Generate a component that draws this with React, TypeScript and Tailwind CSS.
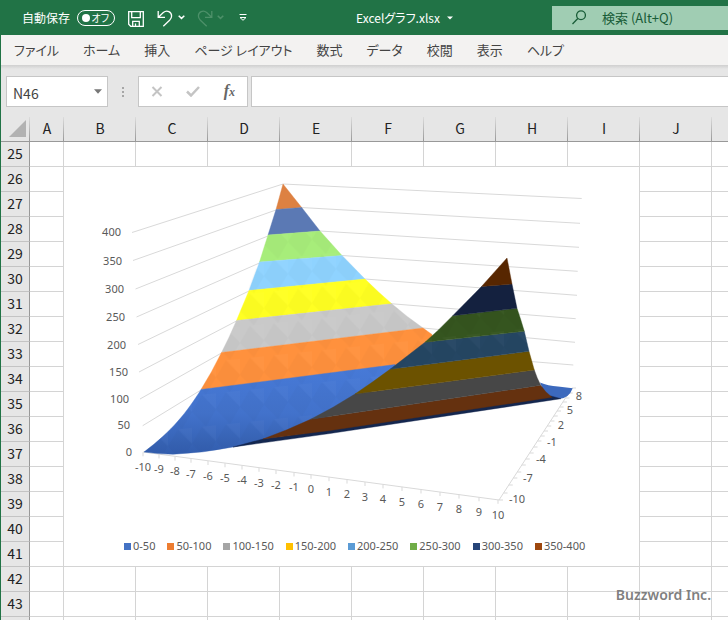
import type { ReactNode } from "react";

const TABS = ["ファイル", "ホーム", "挿入", "ページ レイアウト", "数式", "データ", "校閲", "表示", "ヘルプ"];

const COLUMNS = ["A", "B", "C", "D", "E", "F", "G", "H", "I", "J"];
const FIRST_ROW = 25;
const CHART_ROW = 26;
const CHART_ROW_SPAN = 16;
const ROWS = Array.from({ length: 19 }, (_, i) => FIRST_ROW + i);

const LEGEND = [
  { label: "0-50", swatch: "bg-[#4472c4]" },
  { label: "50-100", swatch: "bg-[#ed7d31]" },
  { label: "100-150", swatch: "bg-[#a5a5a5]" },
  { label: "150-200", swatch: "bg-[#ffc000]" },
  { label: "200-250", swatch: "bg-[#5b9bd5]" },
  { label: "250-300", swatch: "bg-[#70ad47]" },
  { label: "300-350", swatch: "bg-[#264478]" },
  { label: "350-400", swatch: "bg-[#9e480e]" },
];

// [label, x, y]
const VALUE_LABELS: [number, number, number][] = [
  [400, 121, 232],
  [350, 122, 261],
  [300, 124, 289],
  [250, 125, 317],
  [200, 126, 345],
  [150, 128, 372],
  [100, 129, 399],
  [50, 130, 425],
  [0, 132, 452],
];

const X_AXIS: [number, number, number][] = [
  [-10, 143, 467],
  [-9, 159, 469],
  [-8, 175, 471],
  [-7, 191, 474],
  [-6, 208, 476],
  [-5, 225, 478],
  [-4, 242, 480],
  [-3, 259, 483],
  [-2, 276, 485],
  [-1, 294, 487],
  [0, 311, 489],
  [1, 329, 492],
  [2, 347, 494],
  [3, 365, 497],
  [4, 383, 499],
  [5, 402, 502],
  [6, 421, 504],
  [7, 440, 507],
  [8, 459, 509],
  [9, 479, 512],
  [10, 498, 515],
];

const DEPTH_LABELS: [number, number, number][] = [
  [-10, 517, 499],
  [-7, 528, 478],
  [-4, 541, 459],
  [-1, 552, 442],
  [2, 561, 425],
  [5, 570, 410],
  [8, 579, 396],
];

const DEPTH_TICKS = [500, 493, 485, 478, 472, 465, 459, 453, 447, 441, 436, 431, 426, 421, 416, 411, 407, 402, 398, 393, 388];

const WALL_LINES = [
  "M132 232.5 283 184 581.7 198.5",
  "M133 260.5 276 210M301 207.5 580 223.3",
  "M135.5 289 268 236M320 231 579 247.3",
  "M136.5 317 259.5 263M342 255.5 577.7 271.3",
  "M138 344.5 249 291M365 279 577 295.3",
  "M139 372 236.5 321M391 303.7 575.7 318.7",
  "M140 399 221.5 353M423 328 575 342.3",
  "M142.7 425.7 201 390M500 359 573.3 365",
];

const BANDS = [
  { fill: "#dd8142", d: "M283 184 301.7 207.5 276 209.5Z" },
  { fill: "#5b79b4", d: "M276 209.5 301.7 207.5 320 231 268 235Z" },
  { fill: "#a7ed7a", d: "M268 235 320 231 342 255.5 259.5 262Z" },
  { fill: "#8fd3ff", d: "M259.5 262 342 255.5 365 279 249 290.5Z" },
  { fill: "#ffff22", d: "M249 290.5 365 279Q378 292 391.7 303.7L236.5 320.5Z" },
  { fill: "#c9c9c9", d: "M236.5 320.5 391.7 303.7Q407 317 423 328L221.5 352.5Q229 338 236.5 320.5Z" },
  { fill: "#ff913d", d: "M221.5 352.5 423 328 432 334.5 434 345 394 372 201 389.5Q212 372 221.5 352.5Z" },
  {
    fill: "url(#blueBand)",
    d: "M201 389.5 395 364.5 394 376Q312 436 233 447Q203 453 173 454.3Q158 454 144 452C172 431 187 412 201 389.5Z",
  },
];

const SHADED_BANDS = [
  { fill: "#14274f", d: "M233 447 263 439 330 429.5 551 396 561 398.7 330 433.5Z" },
  { fill: "#65310f", d: "M263 439Q288 430 310.7 419.3L540.7 385.3Q545 392 552 397.3L330 430.5Z" },
  { fill: "#474747", d: "M310.7 419.3Q333 408 355 394L534.3 370Q537 378 540.7 385.3Z" },
  { fill: "#6c5200", d: "M355 394Q373 382 390 369.3L529 351.3 534.3 370Z" },
  { fill: "#254663", d: "M390 369.3 425 342.2 524.3 331.3 529 351.3Z" },
  { fill: "#35551f", d: "M425 342.2Q439 330 452.7 315.7L517 308.3Q521 320 524.3 331.3Z" },
  { fill: "#14213f", d: "M452.7 315.7 481.5 286.5 512 284 517 308.3Z" },
  { fill: "#572600", d: "M481.5 286.5 507 258 512 284Z" },
];

function SurfaceChart() {
  return (
    <svg viewBox="64 167 575 360" className="block h-[360px] w-[575px]" role="img" aria-label="等高線グラフ">
      <defs>
        <linearGradient id="blueBand" x1="0" y1="0" x2="0" y2="1">
          <stop offset="0" stopColor="#477ad8" />
          <stop offset="0.55" stopColor="#4272cb" />
          <stop offset="1" stopColor="#325dad" />
        </linearGradient>
        <pattern id="facets" width="24" height="32" patternUnits="userSpaceOnUse" patternTransform="skewY(-6)">
          <path d="M0 16 10 0 24 16 14 32Z" fill="#000" fillOpacity="0.02" />
          <path d="M10 0 24 0 24 16Z" fill="#fff" fillOpacity="0.025" />
        </pattern>
      </defs>

      <g fill="none" stroke="#d9d9d9">
        {WALL_LINES.map((d) => (
          <path key={d} d={d} />
        ))}
        <path d="M143 452 499 500 572 388" />
        {X_AXIS.map(([n, x]) => {
          const y = 452.3 + ((x - 143) * 47.5) / 355;
          return <path key={n} d={`M${x} ${y}v4`} />;
        })}
        {DEPTH_TICKS.map((y) => {
          const x = 499 + ((500 - y) * 73) / 112;
          return <path key={y} d={`M${x} ${y}h4`} />;
        })}
      </g>

      <path d="M540 382.5Q548 386 558 386.5L572.7 388.3Q569 398 560 398.7Q550 399 543 390Z" fill="#3c69bd" />
      {BANDS.map((b) => (
        <path key={b.fill} d={b.d} fill={b.fill} stroke={b.fill} strokeWidth="0.4" />
      ))}
      <path
        d="M268 235 320 231 365 279Q392 306 431.5 334L394 365.5Q312 431 233 447L173 454 144 452C172 431 187 412 201 389.5Q220 360 236.5 320.5Z"
        fill="url(#facets)"
      />
      {SHADED_BANDS.map((b) => (
        <path key={b.fill} d={b.d} fill={b.fill} stroke={b.fill} strokeWidth="0.4" />
      ))}
      <path d="M390 369.3 452.7 315.7 517 308.3 529 351.3Z" fill="url(#facets)" />

      <g fill="#595959" fontSize="11" className="font-['Noto_Sans',sans-serif]">
        {VALUE_LABELS.map(([n, x, y]) => (
          <text key={n} x={x} y={y + 4} textAnchor="end">
            {n}
          </text>
        ))}
        {X_AXIS.map(([n, x, y]) => (
          <text key={n} x={x} y={y + 4} textAnchor="middle">
            {n}
          </text>
        ))}
        {DEPTH_LABELS.map(([n, x, y]) => (
          <text key={n} x={x} y={y + 4} textAnchor="middle">
            {n}
          </text>
        ))}
      </g>
    </svg>
  );
}

function ChartObject() {
  return (
    <div className="h-[399px] overflow-hidden bg-white">
      <SurfaceChart />
      <ul className="flex gap-3 pl-[60px] pt-[11px] font-['Noto_Sans',sans-serif] text-[11px] leading-4 text-[#595959]">
        {LEGEND.map((item) => (
          <li key={item.label} className="flex items-center gap-[2px] whitespace-nowrap">
            <span className={`size-[7px] ${item.swatch}`} />
            {item.label}
          </li>
        ))}
      </ul>
    </div>
  );
}

function Icon({ width, height, children }: { width: number; height: number; children: ReactNode }) {
  return (
    <svg
      width={width}
      height={height}
      viewBox={`0 0 ${width} ${height}`}
      fill="none"
      stroke="currentColor"
      strokeWidth="1.3"
      aria-hidden="true"
    >
      {children}
    </svg>
  );
}

function TitleBar() {
  return (
    <header className="flex h-[35px] shrink-0 items-center bg-[#217346] pl-[22px] text-xs text-white">
      <span id="autosave">自動保存</span>
      <button
        type="button"
        role="switch"
        aria-checked="false"
        aria-labelledby="autosave"
        className="ml-[7px] flex h-4 w-[38px] items-center justify-between rounded-full border border-white pl-1 pr-[5px] text-[10px] leading-none"
      >
        <span className="size-2 rounded-full bg-white" />
        オフ
      </button>
      <button type="button" aria-label="上書き保存" className="ml-[13px] mt-[3px]">
        <Icon width={16} height={16}>
          <path d="M.7.7h14.6v14.6H2.7l-2-2zM3.7.7v6h8.6v-6M4.7 15.3v-5h6.6v5M7.5 12.5v2.8" />
        </Icon>
      </button>
      <button type="button" aria-label="元に戻す" className="ml-[13px] mt-[2px]">
        <Icon width={16} height={17}>
          <path d="M1.2 1v6.3h6.8M1.6 7 6.3 2.6C10 -.4 14.6 2 14.6 6c0 2-1 3.3-2 4.3L6.3 16.3" />
        </Icon>
      </button>
      <button type="button" aria-label="元に戻す一覧" className="ml-[5px]">
        <Icon width={7} height={5}>
          <path d="m.7.8 2.8 2.6L6.3.8" strokeWidth="1.5" />
        </Icon>
      </button>
      <button type="button" aria-label="やり直し" className="ml-3 mt-[2px] text-[#4d9069]">
        <Icon width={16} height={17}>
          <path d="M14.8 1v6.3H8M14.4 7 9.7 2.6C6 -.4 1.4 2 1.4 6c0 2 1 3.3 2 4.3L9.7 16.3" />
        </Icon>
      </button>
      <button type="button" aria-label="やり直し一覧" className="ml-1 text-[#4d9069]">
        <Icon width={7} height={5}>
          <path d="m.7.8 2.8 2.6L6.3.8" strokeWidth="1.5" />
        </Icon>
      </button>
      <button type="button" aria-label="クイック アクセス ツール バーのユーザー設定" className="ml-[15px] mt-px">
        <Icon width={8} height={8}>
          <path d="M.5.5h7M1 3.5h6L4 6.3z" strokeWidth="1" />
        </Icon>
      </button>
      <button type="button" className="ml-[109px] flex items-center gap-[7px] whitespace-nowrap">
        Excelグラフ.xlsx
        <Icon width={6} height={4}>
          <path d="M0 .5h6l-3 3z" fill="currentColor" stroke="none" />
        </Icon>
      </button>
      <label className="ml-auto flex h-6 w-[176px] items-center gap-4 bg-[#a0cdb3] pl-5 text-[13px] text-[#185c37]">
        <Icon width={14} height={15}>
          <circle cx="9" cy="5.2" r="4.4" />
          <path d="M5.8 8.5.5 14" />
        </Icon>
        <input
          type="search"
          aria-label="検索"
          placeholder="検索 (Alt+Q)"
          className="min-w-0 flex-1 bg-transparent outline-none placeholder:text-[#185c37]"
        />
      </label>
    </header>
  );
}

function RibbonTabs() {
  return (
    <nav className="flex h-[30px] shrink-0 items-center gap-6 border-l border-[#217346] bg-[#f3f2f1] pl-[13px] text-[13px] text-[#444]">
      {TABS.map((tab) => (
        <button key={tab} type="button" className="whitespace-nowrap">
          {tab}
        </button>
      ))}
    </nav>
  );
}

function FormulaBar() {
  return (
    <div className="flex h-[52px] shrink-0 items-start border-l border-[#217346] bg-[linear-gradient(#cfcfcf,#e6e6e6_4px)] pl-[5px] pt-[11px]">
      <div className="flex h-[31px] w-[102px] items-center border border-[#c6c6c6] bg-white pl-[6px] pr-[5px]">
        <input
          aria-label="名前ボックス"
          defaultValue="N46"
          className="min-w-0 flex-1 bg-transparent pt-0.5 text-sm text-[#444] outline-none"
        />
        <button type="button" aria-label="名前の一覧">
          <Icon width={8} height={5}>
            <path d="M0 .3h8L4 4.7z" fill="#777" stroke="none" />
          </Icon>
        </button>
      </div>
      <div className="flex h-[31px] w-[30px] flex-col items-center justify-center gap-[2px]">
        <span className="size-[2px] bg-[#a6a6a6]" />
        <span className="size-[2px] bg-[#a6a6a6]" />
        <span className="size-[2px] bg-[#a6a6a6]" />
      </div>
      <div className="flex h-[31px] w-[110px] items-center justify-between border border-[#c6c6c6] bg-white px-3">
        <button type="button" aria-label="キャンセル" className="text-[#c4c4c4]">
          <Icon width={12} height={11}>
            <path d="m1.5 1 9 9M10.5 1l-9 9" strokeWidth="2" />
          </Icon>
        </button>
        <button type="button" aria-label="入力" className="text-[#c4c4c4]">
          <Icon width={14} height={11}>
            <path d="m1 5.5 4 4L13 1" strokeWidth="2.5" />
          </Icon>
        </button>
        <button
          type="button"
          aria-label="関数の挿入"
          className="font-['Liberation_Serif',serif] text-base leading-4 font-bold text-[#666] italic"
        >
          f<span className="text-xs">x</span>
        </button>
      </div>
      <input
        aria-label="数式バー"
        className="ml-[3px] h-[31px] min-w-0 flex-1 border border-r-0 border-[#c6c6c6] bg-white px-2 text-sm outline-none"
      />
    </div>
  );
}

const HEADER_CELL =
  "h-[25px] border-b border-[#999] bg-[#e6e6e6] bg-[linear-gradient(#dcdcdc,#999)] bg-[length:1px_100%] bg-right bg-no-repeat p-0 pb-[2px] font-normal";
const ROW_CELL = "h-[25px] border-r border-b border-r-[#999] border-b-[#c4c4c4] bg-[#e6e6e6] p-0 pb-[2px] font-normal";
const CELL = "h-[25px] border-r border-b border-[#d4d4d4] p-0";

function Sheet() {
  return (
    <table className="w-full table-fixed border-separate border-spacing-0 border-l border-[#217346] text-center text-sm leading-5 text-[#222]">
      <colgroup>
        <col className="w-[29px]" />
        <col className="w-[34px]" />
        {COLUMNS.slice(1).map((c) => (
          <col key={c} className="w-[72px]" />
        ))}
        <col />
      </colgroup>
      <thead>
        <tr>
          <th className={HEADER_CELL}>
            <button type="button" aria-label="すべて選択" className="ml-auto mr-1 block">
              <Icon width={17} height={17}>
                <path d="M17 0v17H0z" fill="#b2b2b2" stroke="none" />
              </Icon>
            </button>
          </th>
          {COLUMNS.map((c) => (
            <th key={c} scope="col" className={HEADER_CELL}>
              {c}
            </th>
          ))}
          <th className="border-b border-[#999] bg-[#e6e6e6] p-0" />
        </tr>
      </thead>
      <tbody>
        {ROWS.map((row) => {
          const besideChart = row >= CHART_ROW && row < CHART_ROW + CHART_ROW_SPAN;
          return (
            <tr key={row}>
              <th scope="row" className={ROW_CELL}>
                {row}
              </th>
              <td className={CELL} />
              {row === CHART_ROW && (
                <td colSpan={8} rowSpan={CHART_ROW_SPAN} className="border-r border-b border-[#d4d4d4] p-0 text-left">
                  <ChartObject />
                </td>
              )}
              {!besideChart && COLUMNS.slice(1, 9).map((c) => <td key={c} className={CELL} />)}
              <td className={CELL} />
              <td className="border-b border-[#d4d4d4] p-0" />
            </tr>
          );
        })}
        <tr>
          <th className={ROW_CELL} />
          {COLUMNS.map((c) => (
            <td key={c} className={CELL} />
          ))}
          <td className="border-b border-[#d4d4d4] p-0" />
        </tr>
      </tbody>
    </table>
  );
}

export default function App() {
  return (
    <div className="relative flex h-screen flex-col overflow-hidden bg-white font-['Noto_Sans_CJK_JP',sans-serif] [font-feature-settings:'palt']">
      <TitleBar />
      <RibbonTabs />
      <FormulaBar />
      <main className="min-h-0 flex-1 overflow-hidden">
        <Sheet />
      </main>
      <div className="absolute right-[17px] bottom-[15px] font-['Noto_Sans',sans-serif] text-sm font-semibold text-[#7f7f7f]">
        Buzzword Inc.
      </div>
    </div>
  );
}
